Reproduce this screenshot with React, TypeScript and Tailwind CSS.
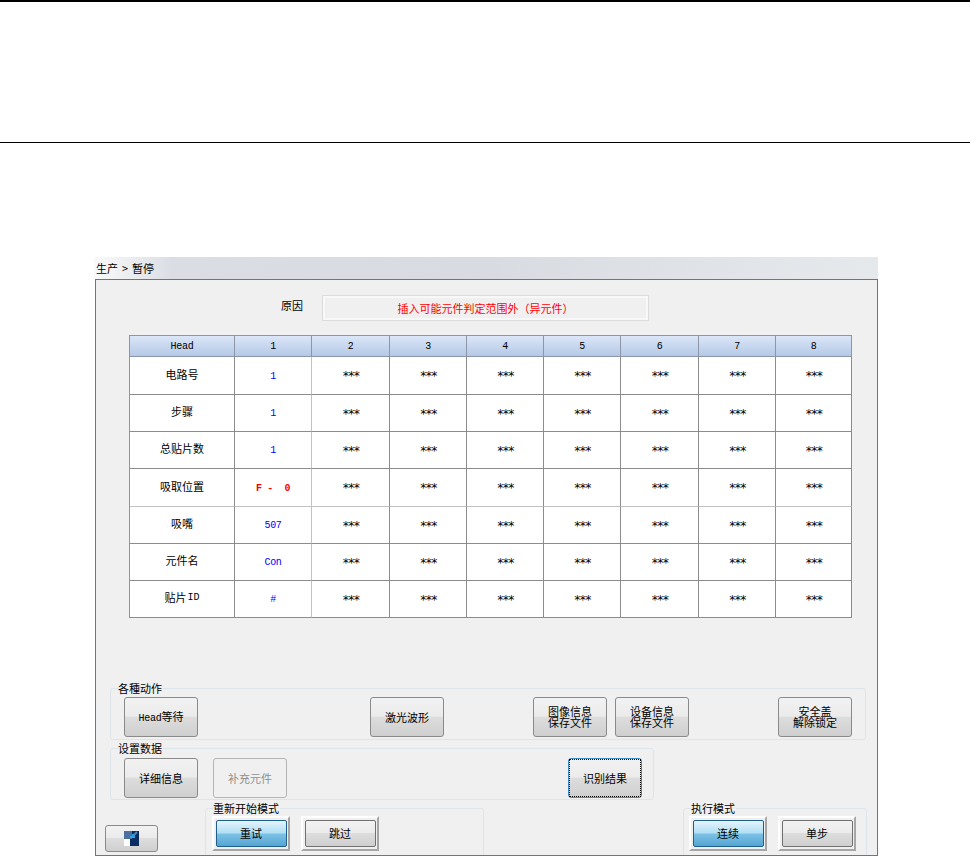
import React from "react";

const FONT = "font-['Noto_Sans_CJK_SC','Liberation_Sans',sans-serif]";
const MONO = "font-['Liberation_Mono','Noto_Sans_CJK_SC',monospace]";
const STAR = "font-['DejaVu_Sans_Mono',monospace]";
const GRAY_GRAD = "bg-[linear-gradient(#f2f2f2_0%,#ebebeb_48%,#dddddd_50%,#cfcfcf_100%)]";

const colW = [105, 77, 78, 77, 77, 77, 78, 77, 76];
const heads = ["Head", "1", "2", "3", "4", "5", "6", "7", "8"];
const rows: { label: React.ReactNode; key: string; value: string; red?: boolean; h: string }[] = [
  { key: "a", label: "电路号", value: "1", h: "h-[38px]" },
  { key: "b", label: "步骤", value: "1", h: "h-[37px]" },
  { key: "c", label: "总贴片数", value: "1", h: "h-[37px]" },
  { key: "d", label: "吸取位置", value: "F -  0", red: true, h: "h-[38px]" },
  { key: "e", label: "吸嘴", value: "507", h: "h-[37px]" },
  { key: "f", label: "元件名", value: "Con", h: "h-[37px]" },
  {
    key: "g",
    label: (
      <>
        贴片<span className={`ml-[1px] text-[10px] ${MONO}`}>ID</span>
      </>
    ),
    value: "#",
    h: "h-[37px]",
  },
];

function Btn({
  lines,
  className = "",
  disabled,
  focused,
}: {
  lines: React.ReactNode[];
  className?: string;
  disabled?: boolean;
  focused?: boolean;
}) {
  return (
    <div
      className={`relative flex h-[40px] w-[74px] shrink-0 flex-col items-center justify-center rounded-[3px] border text-[11px] leading-[11px] ${
        disabled
          ? "border-[#b5b5b5] bg-[#f0f0f0] text-[#8f8f8f]"
          : focused
            ? `border-[#3a8cc4] text-black ${GRAY_GRAD}`
            : `border-[#8a8a8a] text-black ${GRAY_GRAD}`
      } ${className}`}
    >
      {focused && <div className="absolute inset-0 border border-dotted border-black" />}
      {lines.map((l, i) => (
        <span key={i} className="whitespace-nowrap">
          {l}
        </span>
      ))}
    </div>
  );
}

function ModeBtn({ label, active, className = "" }: { label: string; active?: boolean; className?: string }) {
  return (
    <div
      className={`flex h-[35px] w-[78px] shrink-0 items-center justify-center border-[2px] border-t-white border-l-white border-r-[#a6a6a6] border-b-[#a6a6a6] bg-[#f0f0f0] ${className}`}
    >
      <div
        className={`flex h-[27px] w-[71px] shrink-0 items-center justify-center rounded-[2px] border text-[11px] text-black ${
          active
            ? "border-[#1f5f8c] bg-[linear-gradient(#e5f4fc_0%,#b0dff5_48%,#7cc1e6_52%,#55a5d2_100%)]"
            : `border-[#707070] ${GRAY_GRAD}`
        }`}
      >
        {label}
      </div>
    </div>
  );
}

function Group({
  title,
  className = "",
  children,
}: {
  title: string;
  className?: string;
  children: React.ReactNode;
}) {
  return (
    <div className={`relative rounded-[3px] border border-[#dce5ec] ${className}`}>
      <span className="absolute left-[7px] top-[-8px] bg-[#f0f0f0] pr-[1px] text-[11px] leading-[14px] text-black">
        {title}
      </span>
      {children}
    </div>
  );
}

export default function App() {
  return (
    <div className={`h-[857px] w-[970px] overflow-hidden bg-white ${FONT}`}>
      <div className="h-[2px] bg-black" />
      <div className="mt-[140px] h-px bg-black" />
      <div className="ml-[94px] mt-[114px] w-[784px]">
        <div className="flex h-[22px] items-center bg-[linear-gradient(90deg,#fafafa_0%,#dadee4_10%,#d8dce2_50%,#e6e9ec_100%)] pl-[2px] text-[11px] text-black">
          生产<span className="mx-[4px]">&gt;</span>暂停
        </div>
        <div className="ml-[1px] h-[577px] overflow-hidden border border-[#747474] bg-[#f0f0f0] pl-[1px]">
          <div className="mt-[16px] flex h-[24px] items-center">
            <span className="-mt-[6px] ml-[184px] w-[42px] text-[11px] leading-[14px] text-black">原因</span>
            <div className="flex h-[24px] w-[325px] items-center justify-center border-2 border-[#f8f8f8] text-[11px] text-[#ff0000] outline outline-1 outline-[#dcdcdc]">
              插入可能元件判定范围外（异元件）
            </div>
          </div>

          <div className="ml-[32px] mt-[15px] w-[723px] border-l border-t border-[#8d96a6]">
            <div className="flex h-[21px]">
              {heads.map((h, i) => (
                <div
                  key={h}
                  style={{ width: colW[i] }}
                  className={`flex items-center justify-center border-b border-r border-[#8d96a6] bg-[linear-gradient(#dbe6f8,#b4c8e6)] text-[10px] tracking-[-0.3px] text-black ${MONO}`}
                >
                  {h}
                </div>
              ))}
            </div>
            {rows.map((r, ri) => (
              <div key={r.key} className={`flex ${r.h}`}>
                {colW.map((w, ci) => {
                  const rightLight = ci === 1;
                  const bottomLight = ri === 3;
                  const cls = `flex items-center justify-center bg-white border-r border-b ${
                    rightLight ? "border-r-[#c2c2c2]" : "border-r-[#8c8c8c]"
                  } ${bottomLight ? "border-b-[#c2c2c2]" : "border-b-[#8c8c8c]"}`;
                  if (ci === 0)
                    return (
                      <div key={ci} style={{ width: w }} className={`${cls} pb-[3px] text-[11px] text-black`}>
                        {r.label}
                      </div>
                    );
                  if (ci === 1)
                    return (
                      <div
                        key={ci}
                        style={{ width: w }}
                        className={`${cls} whitespace-pre pt-[1px] text-[10px] tracking-[-0.3px] ${MONO} ${
                          r.red ? "font-bold text-[#ff0000]" : "text-[#0000ff]"
                        }`}
                      >
                        {r.value}
                      </div>
                    );
                  return (
                    <div key={ci} style={{ width: w }} className={`${cls} pt-[1px] text-[12px] tracking-[-1.7px] text-black ${STAR}`}>
                      ***
                    </div>
                  );
                })}
              </div>
            ))}
          </div>

          <Group title="各種动作" className="ml-[13px] mt-[70px] flex h-[52px] w-[756px] items-start pl-[13px] pt-[8px]">
            <Btn
              lines={[
                <>
                  <span className={`text-[10px] tracking-[-0.3px] ${MONO}`}>Head</span>等待
                </>,
              ]}
            />
            <Btn lines={["激光波形"]} className="ml-[172px]" />
            <Btn lines={["图像信息", "保存文件"]} className="ml-[89px]" />
            <Btn lines={["设备信息", "保存文件"]} className="ml-[8px]" />
            <Btn lines={["安全盖", "解除锁定"]} className="ml-[89px]" />
          </Group>

          <Group title="设置数据" className="ml-[13px] mt-[8px] flex h-[52px] w-[544px] items-start pl-[13px] pt-[9px]">
            <Btn lines={["详细信息"]} className="h-[39px]" />
            <Btn lines={["补充元件"]} disabled className="ml-[15px] h-[39px]" />
            <Btn lines={["识别结果"]} focused className="ml-[281px] h-[39px]" />
          </Group>

          <div className="relative mt-[8px] flex items-start">
            <div className={`ml-[8px] mt-[17px] flex h-[27px] w-[53px] shrink-0 items-center justify-center rounded-[3px] border border-[#8a8a8a] ${GRAY_GRAD}`}>
              <svg width="15" height="15" viewBox="0 0 15 15">
                <rect width="15" height="15" fill="#0b2c62" />
                <rect width="8" height="8" fill="#4f6f9e" />
                <rect y="8" width="6" height="7" fill="#ffffff" />
                <path d="M6 7 h5 v-4 l-3 0 l0 2 h-2 Z" fill="#2fa6e2" />
                <path d="M9 5 L13 1" stroke="#4f86bd" strokeWidth="2" />
              </svg>
            </div>
            <Group title="重新开始模式" className="ml-[47px] flex h-[60px] w-[279px] items-start pl-[6px] pt-[7px]">
              <ModeBtn label="重试" active />
              <ModeBtn label="跳过" className="ml-[11px]" />
            </Group>
            <Group title="执行模式" className="ml-[199px] flex h-[60px] w-[184px] items-start pl-[5px] pt-[7px]">
              <ModeBtn label="连续" active />
              <ModeBtn label="单步" className="ml-[11px]" />
            </Group>
          </div>
        </div>
      </div>
    </div>
  );
}
